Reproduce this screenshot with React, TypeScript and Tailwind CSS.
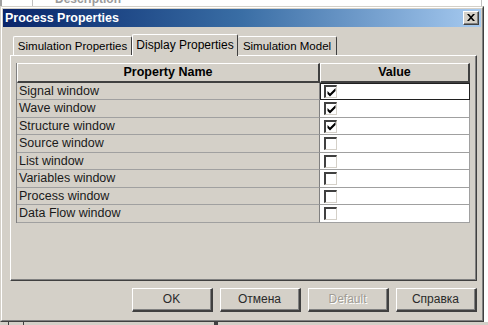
import React from "react";

const rows = [
  { name: "Signal window", checked: true },
  { name: "Wave window", checked: true },
  { name: "Structure window", checked: true },
  { name: "Source window", checked: false },
  { name: "List window", checked: false },
  { name: "Variables window", checked: false },
  { name: "Process window", checked: false },
  { name: "Data Flow window", checked: false },
];

function CheckBox({ checked }: { checked: boolean }) {
  return (
    <div className="box-border flex h-[13px] w-[13px] items-center justify-center border-t-2 border-l-2 border-t-[#404040] border-l-[#404040] border-r border-b border-r-[#d4d0c8] border-b-[#d4d0c8] bg-white">
      {checked && (
        <svg width="9" height="9" viewBox="0 0 9 9">
          <path d="M0.5 3 L3 5.5 L8.5 0 L8.5 3 L3 8.5 L0.5 6 Z" fill="#000" />
        </svg>
      )}
    </div>
  );
}

function Button({ label, disabled }: { label: string; disabled?: boolean }) {
  return (
    <div className="box-border h-[24px] w-[81px] border-t border-l border-t-white border-l-white border-r-2 border-b-2 border-r-[#404040] border-b-[#404040] bg-[#d4d0c8]">
      <div className="flex h-full w-full items-center justify-center border-r border-b border-r-[#808080] border-b-[#808080]">
        {disabled ? (
          <span className="font-normal text-[#a09c94] [text-shadow:1px_1px_0_#ffffff]">{label}</span>
        ) : (
          <span className="font-normal text-[#2a2a2a]">{label}</span>
        )}
      </div>
    </div>
  );
}

export default function App() {
  return (
    <div className="relative h-[325px] w-[488px] overflow-hidden bg-white font-['Liberation_Sans',Arial,sans-serif] text-[11px] text-black">
      {/* window behind */}
      <div className="flex h-[6px] overflow-hidden">
        <div className="h-full w-[2px] bg-[#a0a0a0]" />
        <div className="ml-[30px] h-full w-px bg-[#c0c0c0]" />
        <span className="-mt-[8px] ml-[22px] text-[12px] font-bold leading-[14px] text-[#9a9a9a]">Description</span>
        <div className="ml-auto mr-[6px] h-full w-px bg-[#c0c0c0]" />
      </div>

      {/* dialog */}
      <div className="box-border h-[316px] w-[484px] border border-t-[#d4d0c8] border-l-[#d4d0c8] border-r-[#404040] border-b-[#404040] bg-[#d4d0c8]">
        <div className="box-border flex h-full w-full flex-col border border-t-white border-l-white border-r-[#808080] border-b-[#808080] p-px">
          {/* title bar */}
          <div className="flex h-[18px] items-center bg-gradient-to-r from-[#0a246a] via-[#3a6ea5] to-[#a6caf0] pl-[2px] pr-[2px]">
            <span className="text-[12.5px] font-bold text-white">Process Properties</span>
            <div className="ml-auto box-border h-[14px] w-[16px] border-t border-l border-t-white border-l-white border-r border-b border-r-[#404040] border-b-[#404040] bg-[#d4d0c8]">
              <div className="flex h-full w-full items-center justify-center border-r border-b border-r-[#808080] border-b-[#808080]">
                <svg width="8" height="7" viewBox="0 0 8 7">
                  <path d="M0 0 L2 0 L4 2.3 L6 0 L8 0 L5 3.5 L8 7 L6 7 L4 4.7 L2 7 L0 7 L3 3.5 Z" fill="#000" />
                </svg>
              </div>
            </div>
          </div>

          {/* tabs */}
          <div className="mt-[7px] flex h-[21px] items-end pl-[10px] text-[11.5px]">
            <div className="box-border flex h-[19px] w-[119px] items-center justify-center rounded-t-[2px] border-t border-l border-r border-t-white border-l-white border-r-[#404040] pt-px">
              Simulation Properties
            </div>
            <div className="relative z-10 -mb-px box-border flex h-[22px] w-[106px] items-center justify-center rounded-t-[2px] border-t border-l border-r border-t-white border-l-white border-r-[#404040] bg-[#d4d0c8] pb-[2px] text-[12px]">
              Display Properties
            </div>
            <div className="box-border flex h-[19px] w-[99px] items-center justify-center rounded-t-[2px] border-t border-r border-t-white border-r-[#404040] pt-px">
              Simulation Model
            </div>
          </div>

          {/* tab panel */}
          <div className="ml-[7px] box-border h-[226px] w-[467px] border-t border-l border-t-white border-l-white border-r border-b border-r-[#404040] border-b-[#404040]">
            <div className="box-border h-full w-full border-r border-b border-r-[#808080] border-b-[#808080] pl-[5px] pt-[7px]">
              {/* grid */}
              <div className="box-border w-[454px] border-l border-l-[#808080] text-[#1a1a1a]">
                <div className="flex h-[20px] text-[12.5px] font-bold text-black">
                  <div className="box-border flex w-[303px] items-center justify-center border-t border-l border-t-white border-l-white border-r-2 border-b-2 border-r-[#404040] border-b-[#404040]">
                    Property Name
                  </div>
                  <div className="box-border flex w-[150px] items-center justify-center border-t border-l border-t-white border-l-white border-r-2 border-b-2 border-r-[#404040] border-b-[#404040]">
                    Value
                  </div>
                </div>
                {rows.map((r, i) => (
                  <div key={r.name} className={`flex ${i % 2 === 0 ? "h-[17px]" : "h-[18px]"}`}>
                    <div className="box-border flex w-[303px] items-center border-r border-b border-r-[#808080] border-b-[#a0a0a0] pl-[2px] text-[12.5px]">
                      {r.name}
                    </div>
                    {i === 0 ? (
                      <div className="box-border flex w-[150px] items-center border border-[#202020] bg-white pl-[3px]">
                        <CheckBox checked={r.checked} />
                      </div>
                    ) : (
                      <div className="box-border flex w-[150px] items-center border-r border-b border-r-[#a0a0a0] border-b-[#a0a0a0] bg-white pl-[4px]">
                        <CheckBox checked={r.checked} />
                      </div>
                    )}
                  </div>
                ))}
              </div>
            </div>
          </div>

          {/* buttons */}
          <div className="mt-[7px] flex gap-[7px] pl-[129px] text-[12px]">
            <Button label="OK" />
            <Button label="Отмена" />
            <Button label="Default" disabled />
            <Button label="Справка" />
          </div>
        </div>
      </div>

      {/* window behind, bottom */}
      <div className="flex h-[3px] bg-[#d4d0c8]">
        <div className="ml-[8px] h-full w-px bg-[#404040]" />
        <div className="ml-[14px] h-full w-px bg-[#404040]" />
        <div className="ml-[190px] h-full w-[4px] bg-[#404040]" />
      </div>
    </div>
  );
}
